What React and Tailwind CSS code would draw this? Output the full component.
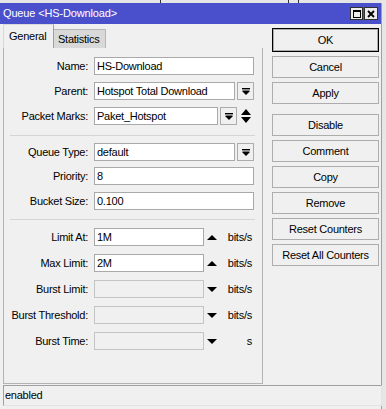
import React from "react";

const Tri = ({ up }) => (
  <svg width="10" height="5" viewBox="0 0 10 5" className="block">
    <path d={up ? "M5 0L10 5H0Z" : "M0 0H10L5 5Z"} fill="#000" />
  </svg>
);

const DropIcon = () => (
  <svg width="8" height="7" viewBox="0 0 8 7" className="block">
    <rect x="0" y="0" width="8" height="1.4" fill="#000" />
    <path d="M0.5 2.6H7.5V3.6L4 7L0.5 3.6Z" fill="#000" />
  </svg>
);

const UpDown = () => (
  <svg width="10" height="14" viewBox="0 0 10 14" className="block">
    <path d="M5 0L10 6H0Z M0 8H10L5 14Z" fill="#000" />
  </svg>
);

const Drop = () => (
  <div className="ml-[2px] w-[17px] h-[18px] border border-[#acacac] bg-[#f0f0f0] flex items-center justify-center">
    <DropIcon />
  </div>
);

const Field = ({ w, value, off }) => (
  <div
    className={`h-[18px] border pl-[2px] leading-[16px] whitespace-nowrap overflow-hidden ${
      off ? "bg-[#f0f0f0] border-[#c4c4c4]" : "bg-white border-[#a9a9a9]"
    }`}
    style={{ width: w }}
  >
    {value}
  </div>
);

const Row = ({ label, mt, children }) => (
  <div className={`flex items-center h-[18px] ${mt}`}>
    <div className="w-[84px] text-right whitespace-nowrap">{label}</div>
    <div className="ml-[6px] flex items-center">{children}</div>
  </div>
);

const RateRow = ({ label, mt, value, up, off, unit }) => (
  <Row label={label} mt={mt}>
    <Field w={110} value={value} off={off} />
    <div className="ml-[3px] w-[10px]">
      <Tri up={up} />
    </div>
    <div className="w-[35px] text-right">{unit}</div>
  </Row>
);

const Sep = ({ mt }) => (
  <div className={`ml-[6px] w-[245px] h-[2px] border-t border-[#d5d5d5] border-b-white ${mt}`} />
);

const Btn = ({ label, mt, main }) => (
  <div
    className={`w-[107px] flex items-center justify-center border ${
      main ? "h-[24px] border-black shadow-[inset_0_0_0_1px_#adadad]" : "h-[22px] border-[#adadad]"
    } bg-[#f0f0f0] ${mt}`}
  >
    {label}
  </div>
);

export default function App() {
  const buttons = [
    ["Cancel", "mt-[4px]"],
    ["Apply", "mt-[4px]"],
    ["Disable", "mt-[10px]"],
    ["Comment", "mt-[4px]"],
    ["Copy", "mt-[4px]"],
    ["Remove", "mt-[4px]"],
    ["Reset Counters", "mt-[4px]"],
    ["Reset All Counters", "mt-[4px]"],
  ];

  return (
    <div className="w-[386px] h-[409px] bg-[#e6e6e6] flex flex-col font-['Liberation_Sans',Arial,sans-serif] text-[11px] tracking-[-0.25px] text-black overflow-hidden">
      <div className="h-[3px] flex shrink-0">
        <div className="ml-[160px] w-px bg-[#333]" />
        <div className="ml-[127px] w-px bg-[#333]" />
        <div className="ml-[9px] w-px bg-[#333]" />
      </div>

      <div className="w-[382px] flex-1 flex flex-col bg-[#f0f0f0] border-r border-[#a0a0a0]">
        <div className="h-[21px] bg-[#4a4fcc] flex items-center pl-[3px] pr-[3px] text-white text-[11px] tracking-[-0.15px]">
          <div className="flex-1">Queue &lt;HS-Download&gt;</div>
          <div className="w-[13px] h-[13px] border border-[#303030] bg-[#ececec] flex items-center justify-center">
            <div className="w-[8px] h-[8px] border border-black border-t-2" />
          </div>
          <div className="ml-[1px] w-[14px] h-[13px] border border-[#303030] bg-[#ececec] flex items-center justify-center">
            <svg width="8" height="8" viewBox="0 0 8 8" className="block">
              <path d="M1 1L7 7M7 1L1 7" stroke="#000" strokeWidth="1.8" />
            </svg>
          </div>
        </div>

        <div className="flex pl-[3px]">
          <div className="w-[260px] flex flex-col">
            <div className="h-[24px] flex items-end">
              <div className="w-[51px] h-[24px] border-l border-t border-[#d9d9d9] border-r-[#a0a0a0] border-r bg-[#f0f0f0] flex items-center pl-[5px] pb-[1px]">
                General
              </div>
              <div className="w-[52px] h-[19px] border-t border-r border-[#b5b5b5] bg-[#d9d9d9] flex items-center pl-[4px]">
                Statistics
              </div>
            </div>
            <div className="h-[336px] border border-[#b4b4b4] border-t-0 pt-[9px]">
              <Row label="Name:">
                <Field w={160} value="HS-Download" />
              </Row>
              <Row label="Parent:" mt="mt-[7px]">
                <Field w={141} value="Hotspot Total Download" />
                <Drop />
              </Row>
              <Row label="Packet Marks:" mt="mt-[7px]">
                <Field w={124} value="Paket_Hotspot" />
                <Drop />
                <div className="ml-[4px]">
                  <UpDown />
                </div>
              </Row>
              <Sep mt="mt-[10px]" />
              <Row label="Queue Type:" mt="mt-[6px]">
                <Field w={141} value="default" />
                <Drop />
              </Row>
              <Row label="Priority:" mt="mt-[6px]">
                <Field w={160} value="8" />
              </Row>
              <Row label="Bucket Size:" mt="mt-[7px]">
                <Field w={160} value="0.100" />
              </Row>
              <Sep mt="mt-[9px]" />
              <RateRow label="Limit At:" mt="mt-[7px]" value="1M" up unit="bits/s" />
              <RateRow label="Max Limit:" mt="mt-[8px]" value="2M" up unit="bits/s" />
              <RateRow label="Burst Limit:" mt="mt-[8px]" value="" off unit="bits/s" />
              <RateRow label="Burst Threshold:" mt="mt-[8px]" value="" off unit="bits/s" />
              <RateRow label="Burst Time:" mt="mt-[8px]" value="" off unit="s" />
            </div>
          </div>

          <div className="ml-[9px] pt-[4px] flex flex-col">
            <Btn label="OK" main />
            {buttons.map(([label, mt]) => (
              <Btn key={label} label={label} mt={mt} />
            ))}
          </div>
        </div>

        <div className="mt-[1px] ml-[3px] w-[379px] h-[21px] border border-[#a0a0a0] border-r-[#e3e3e3] border-b-[#e3e3e3] flex items-center pl-[1px]">
          enabled
        </div>
      </div>
    </div>
  );
}
